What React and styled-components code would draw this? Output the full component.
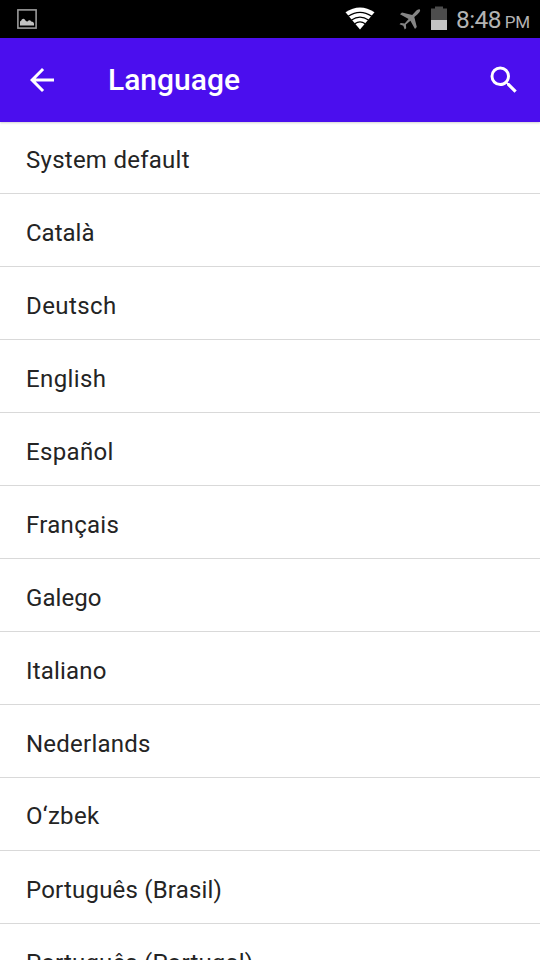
import React from 'react';
import styled, { createGlobalStyle } from 'styled-components';

const Global = createGlobalStyle`
  * { box-sizing: border-box; }
  html, body { margin: 0; padding: 0; background: #fff; overflow: hidden; }
`;
const Screen = styled.div`
  width: 540px; height: 960px; overflow: hidden;
  display: flex; flex-direction: column;
  background: #fff; font-family: Roboto, sans-serif;
`;
const StatusBar = styled.div`
  height: 38px; flex: none; background: #000; color: #b3b3b3;
  display: flex; align-items: flex-start; padding: 0 9px 0 17px;
`;
const Spacer = styled.div`flex: 1;`;
const Icon = styled.svg`
  display: block; flex: none;
  margin-top: ${p => p.$top || 0}px;
  margin-right: ${p => p.$gap || 0}px;
`;
const Clock = styled.div`
  width: 75px; padding-right: 1px; display: flex; align-items: baseline; justify-content: space-between;
  font-size: 24.5px; line-height: 40px; white-space: nowrap; letter-spacing: -0.6px;
`;
const Meridiem = styled.span`font-size: 17px; letter-spacing: -0.2px;`;
const AppBar = styled.header`
  height: 84px; flex: none; background: #4b0eee; color: #fff;
  display: flex; align-items: center; padding: 0 18px 0 24px;
  box-shadow: 0 1px 2px rgba(0, 0, 0, 0.18); position: relative;
`;
const Title = styled.h1`
  margin: 0 0 0 48px; flex: 1; font-size: 30px; font-weight: 500; line-height: 36px;
`;
const List = styled.ul`
  margin: 0; padding: 0; list-style: none; flex: 1; overflow: hidden;
`;
const Row = styled.li`
  height: ${p => (p.$first ? 72 : 73)}px;
  padding: ${p => (p.$first || p.$raised ? 23 : 24)}px 26px 0;
  border-bottom: 1px solid #d9d9d9; color: #242424; font-size: 24px; line-height: 30px;
  letter-spacing: ${p => p.$tracking}px;
`;
const languages = [
  { name: 'System default', tracking: 0.26 },
  { name: 'Català', tracking: 0 },
  { name: 'Deutsch', tracking: 0.42 },
  { name: 'English', tracking: 0.38 },
  { name: 'Español', tracking: 0.35 },
  { name: 'Français', tracking: 0.3 },
  { name: 'Galego', tracking: 0.05 },
  { name: 'Italiano', tracking: 0.18 },
  { name: 'Nederlands', tracking: 0.24 },
  { name: 'O‘zbek', tracking: 0.3, raised: true },
  { name: 'Português (Brasil)', tracking: 0.2 },
  { name: 'Português (Portugal)', tracking: 0.18 },
];

const PictureIcon = () => (
  <Icon $top={9} width="20" height="20" viewBox="0 0 20 20">
    <rect x="0.9" y="0.9" width="18.2" height="18.2" fill="none" stroke="#9b9b9b" strokeWidth="1.6" />
    <path d="M3 16.6V12.6Q4.3 12.2 4.8 10.6Q6.5 8.6 8 10.8Q8.8 12.6 10.4 12.4Q12.8 10.2 14.2 12.4Q17 12.6 17 15V16.6z" fill="#c2c2c2" />
  </Icon>
);

const WifiIcon = () => (
  <Icon $top={7} $gap={24} width="30" height="23" viewBox="0 0 30 23">
    <path d="M0.5 5.3Q15-4.2 29.5 5.3L15 22.5z" fill="#fff" />
    <path d="M3.2 9.3Q15 1.3 26.8 9.3M6.5 13.1Q15 7.3 23.5 13.1M9.8 16.8Q15 13.1 20.2 16.8" fill="none" stroke="#000" strokeWidth="1.2" />
  </Icon>
);

const PlaneIcon = () => (
  <Icon $top={9} $gap={10} width="22" height="21" viewBox="0 0 22 21">
    <path d="M20.8 0.4C19.4-.1 17.5 1.4 15.8 3.2L13.2 6.1L3 3.6L1 5.2L9.6 10L5.7 14.5L1.8 13.9L.5 15.3L4.3 16.8L5.7 20.5L7.2 19.2L6.9 15.6L11.4 11.8L16 20L17.8 18L15.3 8L18.3 5.5C20.4 3.5 21.8 1.4 20.8.4z" fill="#858585" />
  </Icon>
);

const BatteryIcon = () => (
  <Icon $top={6} $gap={9} width="16" height="24" viewBox="0 0 16 24">
    <path d="M4 0.5h8v2h4v12H0v-12h4z" fill="#4d4d4d" />
    <path d="M0 14h16v10H0z" fill="#c4c4c4" />
  </Icon>
);

const BackIcon = () => (
  <Icon width="36" height="36" viewBox="0 0 24 24" fill="#fff">
    <path d="M20 11H7.83l5.59-5.59L12 4l-8 8 8 8 1.41-1.41L7.83 13H20v-2z" />
  </Icon>
);

const SearchIcon = () => (
  <Icon width="36" height="36" viewBox="0 0 24 24" fill="#fff">
    <path d="M15.5 14h-.79l-.28-.27A6.47 6.47 0 0 0 16 9.5 6.5 6.5 0 1 0 9.5 16c1.61 0 3.09-.59 4.23-1.57l.27.28v.79l5 4.99L20.49 19l-4.99-5zm-6 0C7.01 14 5 11.99 5 9.5S7.01 5 9.5 5 14 7.01 14 9.5 11.99 14 9.5 14z" />
  </Icon>
);

export default function App() {
  return (
    <Screen>
      <Global />
      <StatusBar>
        <PictureIcon />
        <Spacer />
        <WifiIcon />
        <PlaneIcon />
        <BatteryIcon />
        <Clock><span>8:48</span><Meridiem>PM</Meridiem></Clock>
      </StatusBar>
      <AppBar>
        <BackIcon />
        <Title>Language</Title>
        <SearchIcon />
      </AppBar>
      <List>
        {languages.map((l, i) => (
          <Row key={l.name} $first={i === 0} $raised={l.raised} $tracking={l.tracking}>{l.name}</Row>
        ))}
      </List>
    </Screen>
  );
}
